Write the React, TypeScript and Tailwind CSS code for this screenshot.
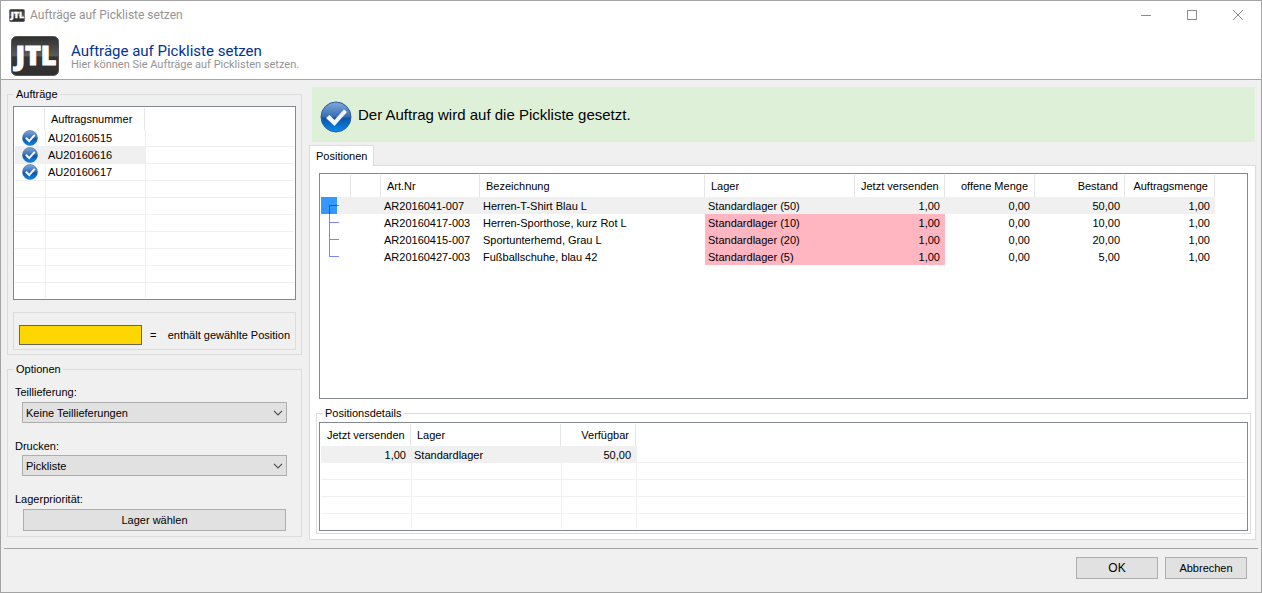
import type { ReactNode } from "react";

const orders = ["AU20160515", "AU20160616", "AU20160617"];
const selectedOrder = "AU20160616";

const positions = [
  { artNr: "AR2016041-007", name: "Herren-T-Shirt Blau L", lager: "Standardlager (50)", send: "1,00", open: "0,00", stock: "50,00", amount: "1,00" },
  { artNr: "AR20160417-003", name: "Herren-Sporthose, kurz Rot L", lager: "Standardlager (10)", send: "1,00", open: "0,00", stock: "10,00", amount: "1,00" },
  { artNr: "AR20160415-007", name: "Sportunterhemd, Grau L", lager: "Standardlager (20)", send: "1,00", open: "0,00", stock: "20,00", amount: "1,00" },
  { artNr: "AR20160427-003", name: "Fußballschuhe, blau 42", lager: "Standardlager (5)", send: "1,00", open: "0,00", stock: "5,00", amount: "1,00" },
];

const JtlLogo = ({ className }: { className: string }) => (
  <svg viewBox="0 0 48 40" className={className} role="img" aria-label="JTL">
    <defs>
      <linearGradient id="jtl" x1="0" y1="0" x2="0" y2="1">
        <stop offset="0" stopColor="#2e2e2e" />
        <stop offset="0.5" stopColor="#5c5c5c" />
        <stop offset="0.52" stopColor="#363636" />
        <stop offset="1" stopColor="#303030" />
      </linearGradient>
    </defs>
    <rect x="0.5" y="0.5" width="47" height="39" rx="5" fill="url(#jtl)" stroke="#555" />
    <text
      x="25"
      y="29"
      textAnchor="middle"
      fontSize="27"
      fontWeight="800"
      fill="#fff"
      stroke="#fff"
      strokeWidth="1"
      fontFamily="'Open Sans', 'Noto Sans', sans-serif"
    >
      JTL
    </text>
  </svg>
);

const CheckIcon = ({ className }: { className: string }) => (
  <svg viewBox="0 0 32 32" className={className} aria-hidden="true">
    <defs>
      <linearGradient id="ball" x1="0" y1="0" x2="0" y2="1">
        <stop offset="0" stopColor="#7fa9da" />
        <stop offset="0.48" stopColor="#3a70b4" />
        <stop offset="0.54" stopColor="#0c55a6" />
        <stop offset="1" stopColor="#0a8af0" />
      </linearGradient>
    </defs>
    <circle cx="16" cy="16" r="15" fill="url(#ball)" stroke="#2a5f9c" />
    <path d="M6 17l3.500-3 5 5L24 8.500l3 2.500L14.500 25z" fill="#f4f6fa" />
  </svg>
);

// connector lines between the positions that belong together
const TreeNode = ({ first, last }: { first: boolean; last: boolean }) => (
  <svg width="30" height="17" className="block" shapeRendering="crispEdges" aria-hidden="true">
    {first && <rect width="16" height="17" fill="#3399ff" />}
    <rect x="8" y={first ? 8 : 0} width="1" height={first || last ? 9 : 17} fill="#0000ff" opacity="0.5" />
    <rect x="9" y="8" width="9" height="1" fill="#0000ff" opacity="0.5" />
  </svg>
);

const Th = ({ children, right, bare }: { children?: ReactNode; right?: boolean; bare?: boolean }) => (
  <th
    className={`h-[22px] px-1.5 py-0 font-normal leading-4 whitespace-nowrap ${right ? "text-right" : "text-left"} ${bare ? "" : "border-r border-[#e5e5e5]"}`}
  >
    {children}
  </th>
);

const Td = ({ children, right, className = "" }: { children?: ReactNode; right?: boolean; className?: string }) => (
  <td className={`h-[17px] py-0 leading-4 whitespace-nowrap ${right ? "pr-[5px] text-right" : "pl-[3px]"} ${className}`}>
    {children}
  </td>
);

const GroupBox = ({ title, className = "", children }: { title: string; className?: string; children: ReactNode }) => (
  <fieldset className={`min-w-0 border border-[#dcdcdc] ${className}`}>
    <legend className="ml-1.5 px-0.5 leading-4">{title}</legend>
    {children}
  </fieldset>
);

const SelectBox = ({ id, value }: { id: string; value: string }) => (
  <div className="relative mr-2 ml-2">
    <select id={id} defaultValue={value} className="block h-[21px] w-full appearance-none border border-[#adadad] bg-[#e1e1e1] px-[3px] leading-4">
      <option>{value}</option>
    </select>
    <svg viewBox="0 0 10 6" className="pointer-events-none absolute top-2 right-1 h-1.5 w-2.5" aria-hidden="true">
      <path d="M1 0.800l4 4 4-4" fill="none" stroke="#505050" strokeWidth="1.200" />
    </svg>
  </div>
);

const line = "border-b border-[#f0f0f0]";
const gridCell = "border-b border-l border-[#f0f0f0]";

const OrderList = () => (
  <div className="border border-[#828790] bg-white p-px">
    <table className="w-full table-fixed border-separate border-spacing-0">
      <colgroup>
        <col className="w-[30px]" />
        <col className="w-[100px]" />
        <col />
      </colgroup>
      <thead>
        <tr>
          <Th />
          <Th>Auftragsnummer</Th>
          <Th bare />
        </tr>
      </thead>
      <tbody>
        {orders.map((nr) => {
          const bg = nr === selectedOrder ? "bg-[#f0f0f0]" : "";
          return (
            <tr key={nr}>
              <td className={`h-[17px] p-0 pl-[7px] ${line} ${bg}`}>
                <CheckIcon className="block size-4" />
              </td>
              <td className={`h-[17px] p-0 pl-0.5 leading-4 ${gridCell} ${bg}`}>{nr}</td>
              <td className={`p-0 ${gridCell}`} />
            </tr>
          );
        })}
        {[1, 2, 3, 4, 5, 6].map((i) => (
          <tr key={i}>
            <td className={`h-[17px] p-0 ${line}`} />
            <td className={`p-0 ${gridCell}`} />
            <td className={`p-0 ${gridCell}`} />
          </tr>
        ))}
        <tr>
          <td className="h-[15px] p-0" />
          <td className="border-l border-[#f0f0f0] p-0" />
          <td className="border-l border-[#f0f0f0] p-0" />
        </tr>
      </tbody>
    </table>
  </div>
);

const PositionTable = () => (
  <div className="mr-[3px] ml-[3px] flex-1 border border-[#828790] bg-white p-px">
    <table className="w-full table-fixed border-separate border-spacing-0">
      <colgroup>
        <col className="w-[30px]" />
        <col className="w-[30px]" />
        <col className="w-[99px]" />
        <col className="w-[225px]" />
        <col className="w-[150px]" />
        <col className="w-[90px]" />
        <col className="w-[90px]" />
        <col className="w-[90px]" />
        <col className="w-[90px]" />
        <col />
      </colgroup>
      <thead>
        <tr>
          <Th />
          <Th />
          <Th>Art.Nr</Th>
          <Th>Bezeichnung</Th>
          <Th>Lager</Th>
          <Th right>Jetzt versenden</Th>
          <Th right>offene Menge</Th>
          <Th right>Bestand</Th>
          <Th right>Auftragsmenge</Th>
          <Th bare />
        </tr>
      </thead>
      <tbody>
        {positions.map((p, i) => {
          const bg = i === 0 ? "bg-[#f0f0f0]" : "";
          const stockBg = i === 0 ? "bg-[#f0f0f0]" : "bg-[#ffb6c1]";
          return (
            <tr key={p.artNr}>
              <td className={`h-[17px] p-0 ${bg}`}>
                <TreeNode first={i === 0} last={i === positions.length - 1} />
              </td>
              <Td className={bg} />
              <Td className={bg}>{p.artNr}</Td>
              <Td className={bg}>{p.name}</Td>
              <Td className={stockBg}>{p.lager}</Td>
              <Td right className={stockBg}>{p.send}</Td>
              <Td right className={bg}>{p.open}</Td>
              <Td right className={bg}>{p.stock}</Td>
              <Td right className={bg}>{p.amount}</Td>
              <Td />
            </tr>
          );
        })}
      </tbody>
    </table>
  </div>
);

const DetailTable = () => (
  <div className="mx-0.5 mt-px mb-0.5 border border-[#828790] bg-white p-px">
    <table className="w-full table-fixed border-separate border-spacing-0">
      <colgroup>
        <col className="w-[90px]" />
        <col className="w-[150px]" />
        <col className="w-[75px]" />
        <col />
      </colgroup>
      <thead>
        <tr>
          <Th right>Jetzt versenden</Th>
          <Th>Lager</Th>
          <Th right>Verfügbar</Th>
          <Th bare />
        </tr>
      </thead>
      <tbody>
        <tr>
          <Td right className="bg-[#f0f0f0]">1,00</Td>
          <Td className="bg-[#f0f0f0]">Standardlager</Td>
          <Td right className="bg-[#f0f0f0]">50,00</Td>
          <Td className={gridCell} />
        </tr>
        {[1, 2, 3].map((i) => (
          <tr key={i}>
            <Td className={line} />
            <Td className={gridCell} />
            <Td className={gridCell} />
            <Td className={gridCell} />
          </tr>
        ))}
        <tr>
          <td className="h-[15px] p-0" />
          <td className="border-l border-[#f0f0f0] p-0" />
          <td className="border-l border-[#f0f0f0] p-0" />
          <td className="border-l border-[#f0f0f0] p-0" />
        </tr>
      </tbody>
    </table>
  </div>
);

export default function App() {
  return (
    <div className="flex min-h-screen flex-col border border-[#a3a3a3] bg-[#f0f0f0] font-['Liberation_Sans',Arial,sans-serif] text-[11px] text-black">
      <header className="border-b border-[#a5a5a5] bg-white font-[Roboto,'Open_Sans',sans-serif]">
        <div className="flex h-7 items-center pl-2">
          <JtlLogo className="h-[13px] w-4" />
          <span className="ml-[5px] text-[12px] leading-4 text-[#949494]">Aufträge auf Pickliste setzen</span>
          <div className="mr-[17px] ml-auto flex gap-[34px] text-[#8c8c8c]">
            <button type="button" aria-label="Minimieren">
              <svg width="12" height="12" className="block" shapeRendering="crispEdges">
                <path d="M1 6.500h10" stroke="currentColor" />
              </svg>
            </button>
            <button type="button" aria-label="Maximieren">
              <svg width="12" height="12" className="block" shapeRendering="crispEdges">
                <rect x="1.500" y="1.500" width="9" height="9" fill="none" stroke="currentColor" />
              </svg>
            </button>
            <button type="button" aria-label="Schließen">
              <svg width="12" height="12" className="block">
                <path d="M1 1l10 10M11 1L1 11" stroke="currentColor" />
              </svg>
            </button>
          </div>
        </div>
        <div className="flex h-[50px] items-start pt-[7px] pl-2.5">
          <JtlLogo className="h-10 w-12" />
          <div className="ml-3 pt-[7px]">
            <h1 className="text-[15px] leading-4 text-[#003399]">Aufträge auf Pickliste setzen</h1>
            <p className="text-[11px] leading-3 text-[#949494]">Hier können Sie Aufträge auf Picklisten setzen.</p>
          </div>
        </div>
      </header>

      <main className="flex flex-1 gap-[7px] pr-[5px] pb-2 pl-1.5">
        <div className="w-[295px] shrink-0 pt-1.5">
          <GroupBox title="Aufträge">
            <div className="px-[5px] py-1">
              <OrderList />
              <div className="mt-3 flex h-[38px] items-end border border-[#dcdcdc] px-[5px] pb-1">
                <div className="h-5 w-[123px] shrink-0 border border-[#6b6650] bg-[#ffd700]" />
                <span className="ml-2 leading-5">=</span>
                <span className="ml-auto leading-5 whitespace-nowrap">enthält gewählte Position</span>
              </div>
            </div>
          </GroupBox>

          <GroupBox title="Optionen" className="mt-1.5">
            <div className="px-1.5 pt-[7px] pb-[5px]">
              <label htmlFor="teil" className="mb-0.5 ml-px block leading-4">Teillieferung:</label>
              <SelectBox id="teil" value="Keine Teillieferungen" />
              <label htmlFor="druck" className="mt-[15px] mb-px ml-px block leading-4">Drucken:</label>
              <SelectBox id="druck" value="Pickliste" />
              <label htmlFor="lager" className="mt-[15px] mb-0.5 ml-px block leading-4">Lagerpriorität:</label>
              <div className="mr-[9px] ml-[9px]">
                <button id="lager" type="button" className="block h-[22px] w-full border border-[#adadad] bg-[#e1e1e1] leading-4">
                  Lager wählen
                </button>
              </div>
            </div>
          </GroupBox>
        </div>

        <div className="flex min-w-0 flex-1 flex-col pt-[7px]">
          <div className="mr-px ml-[3px] flex h-[55px] items-center bg-[#dff0d8] pl-2">
            <CheckIcon className="mt-1 size-8" />
            <p className="ml-1.5 font-['Liberation_Sans',sans-serif] text-[15px] leading-5">Der Auftrag wird auf die Pickliste gesetzt.</p>
          </div>
          <div role="tablist" className="mt-[3px] flex">
            <button type="button" role="tab" aria-selected="true" className="relative -mb-px h-[21px] border border-b-0 border-[#dcdcdc] bg-white px-1.5 leading-4">
              Positionen
            </button>
          </div>
          <div className="flex flex-1 flex-col border border-[#dcdcdc] bg-white pt-[7px] pr-1 pb-[5px] pl-1.5">
            <PositionTable />
            <GroupBox title="Positionsdetails" className="mt-1.5">
              <DetailTable />
            </GroupBox>
          </div>
        </div>
      </main>

      <footer className="mx-[3px] flex justify-end gap-[7px] border-t border-[#a5a5a5] pt-2 pr-[11px] pb-[13px]">
        <button type="button" className="h-[22px] w-[82px] border border-[#adadad] bg-[#e1e1e1] text-[12px] leading-4">OK</button>
        <button type="button" className="h-[22px] w-[82px] border border-[#adadad] bg-[#e1e1e1] leading-4">Abbrechen</button>
      </footer>
    </div>
  );
}
